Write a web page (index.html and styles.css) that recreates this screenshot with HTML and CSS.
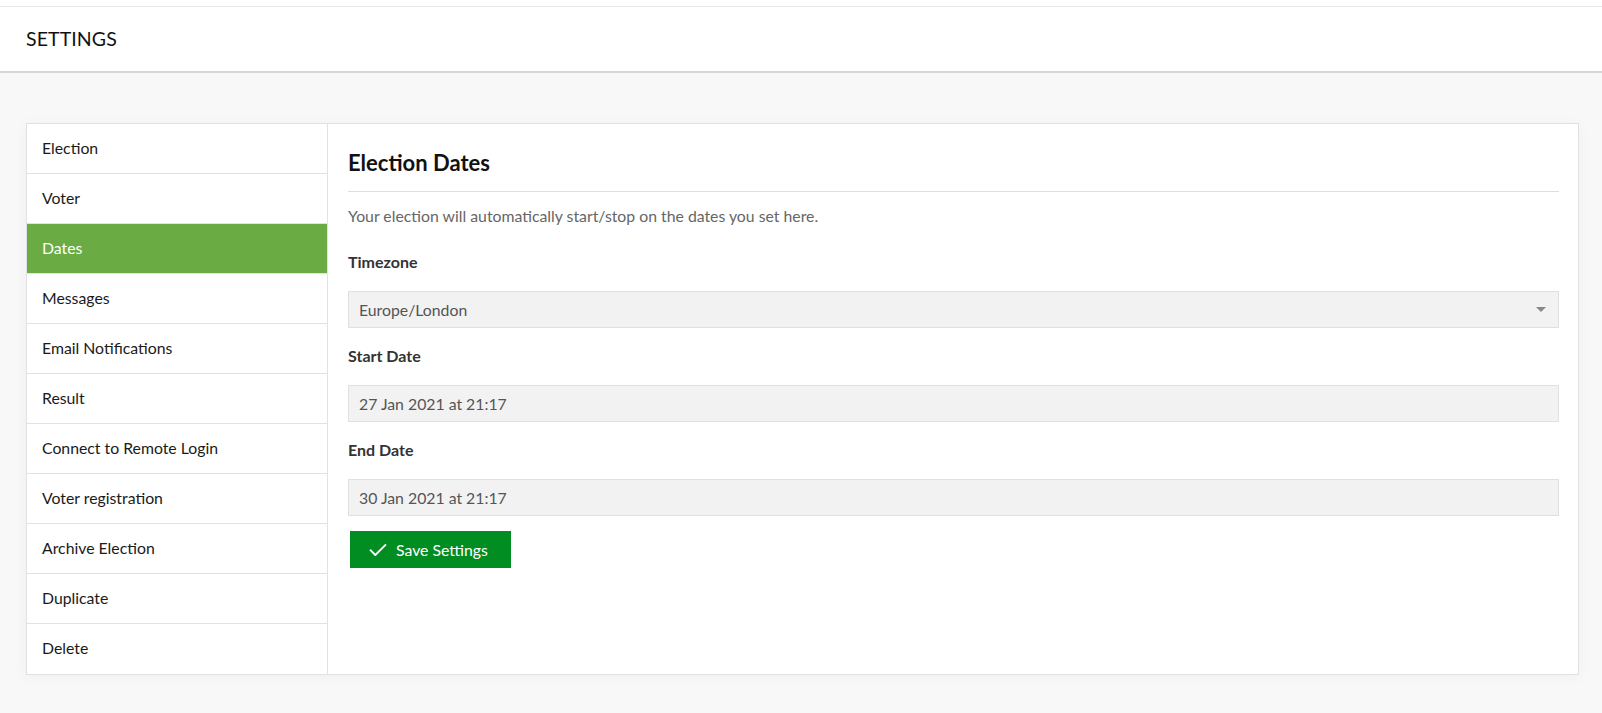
FILE: index.html
```html
<!DOCTYPE html>
<html lang="en">
<head>
<meta charset="utf-8">
<title>Settings</title>
<link rel="stylesheet" href="styles.css">
</head>
<body>
<div class="topstrip"></div>
<header class="header">
  <h1 class="header-title">SETTINGS</h1>
</header>
<main class="main">
  <div class="card">
    <nav class="sidebar">
      <a class="nav-item">Election</a>
      <a class="nav-item">Voter</a>
      <a class="nav-item active">Dates</a>
      <a class="nav-item">Messages</a>
      <a class="nav-item">Email Notifications</a>
      <a class="nav-item">Result</a>
      <a class="nav-item">Connect to Remote Login</a>
      <a class="nav-item">Voter registration</a>
      <a class="nav-item">Archive Election</a>
      <a class="nav-item">Duplicate</a>
      <a class="nav-item">Delete</a>
    </nav>
    <section class="content">
      <h2 class="content-title">Election Dates</h2>
      <p class="intro">Your election will automatically start/stop on the dates you set here.</p>
      <label class="field-label">Timezone</label>
      <div class="field select">
        <span>Europe/London</span>
        <span class="caret"></span>
      </div>
      <label class="field-label">Start Date</label>
      <div class="field"><span>27 Jan 2021 at 21:17</span></div>
      <label class="field-label">End Date</label>
      <div class="field"><span>30 Jan 2021 at 21:17</span></div>
      <button class="save-btn" type="button">
        <svg class="check" width="18" height="14" viewBox="0 0 18 14" aria-hidden="true">
          <path d="M1.5 7.2 L6.3 12 L16.5 1.8" fill="none" stroke="#fff" stroke-width="1.8" stroke-linecap="round" stroke-linejoin="round"/>
        </svg>
        <span>Save Settings</span>
      </button>
    </section>
  </div>
</main>
</body>
</html>
```

FILE: styles.css
```css
* { box-sizing: border-box; }

html, body {
  margin: 0;
  padding: 0;
}

body {
  background: #f8f8f8;
  font-family: "Lato", "Liberation Sans", sans-serif;
  color: #1a1a1a;
  min-height: 713px;
}

.topstrip {
  height: 7px;
  background: #fff;
  border-bottom: 1px solid #e6e6e6;
}

.header {
  background: #fff;
  height: 66px;
  border-bottom: 2px solid #d6d6d6;
  display: flex;
  align-items: center;
  padding-left: 26px;
  padding-bottom: 1px;
}

.header-title {
  margin: 0;
  font-size: 19.5px;
  font-weight: 400;
  color: #111;
  letter-spacing: 0.1px;
}

.main {
  padding: 50px 23px 39px 26px;
}

.card {
  display: flex;
  background: #fff;
  border: 1px solid #e0e0e6;
  box-shadow: 0 2px 14px rgba(0, 0, 0, 0.04);
  min-height: 552px;
}

.sidebar {
  width: 301px;
  flex: none;
  border-right: 1px solid #e1e1e6;
  display: flex;
  flex-direction: column;
}

.nav-item {
  display: flex;
  align-items: center;
  height: 50px;
  padding-left: 15px;
  padding-bottom: 2px;
  font-size: 15.8px;
  color: #1a1a1a;
  border-bottom: 1px solid #e1e1e6;
  cursor: pointer;
}

.nav-item:last-child {
  border-bottom: none;
  height: 49px;
}

.nav-item.active {
  background: #6aac43;
  color: #fff;
  border-bottom-color: #e1e1e6;
}

.content {
  flex: 1;
  padding: 25px 19px 20px 20px;
  display: flex;
  flex-direction: column;
  align-items: stretch;
}

.content-title {
  margin: 0;
  font-size: 22px;
  font-weight: 700;
  line-height: 28px;
  color: #111;
  padding-bottom: 14px;
  border-bottom: 1px solid #dedede;
}

.intro {
  margin: 14px 0 0;
  font-size: 15.8px;
  line-height: 20px;
  color: #666;
}

.field-label {
  display: block;
  font-size: 16px;
  font-weight: 700;
  line-height: 20px;
  color: #333;
  margin-top: 26px;
  margin-bottom: 19px;
}

.field + .field-label {
  margin-top: 18px;
  margin-bottom: 19px;
}

.field {
  height: 37px;
  background: #f2f2f2;
  border: 1px solid #e0e0e3;
  display: flex;
  align-items: center;
  justify-content: space-between;
  padding: 0 12px 0 10px;
  font-size: 15.8px;
  color: #555;
}

.caret {
  width: 0;
  height: 0;
  border-left: 5px solid transparent;
  border-right: 5px solid transparent;
  border-top: 5px solid #888;
}

.save-btn {
  align-self: flex-start;
  margin: 15px 0 0 2px;
  height: 37px;
  width: 161px;
  background: #028d23;
  color: #fff;
  border: none;
  display: flex;
  align-items: center;
  justify-content: flex-start;
  gap: 9px;
  font-family: inherit;
  font-size: 15.8px;
  cursor: pointer;
  padding: 0 0 0 19px;
}

.check {
  flex: none;
}
```
